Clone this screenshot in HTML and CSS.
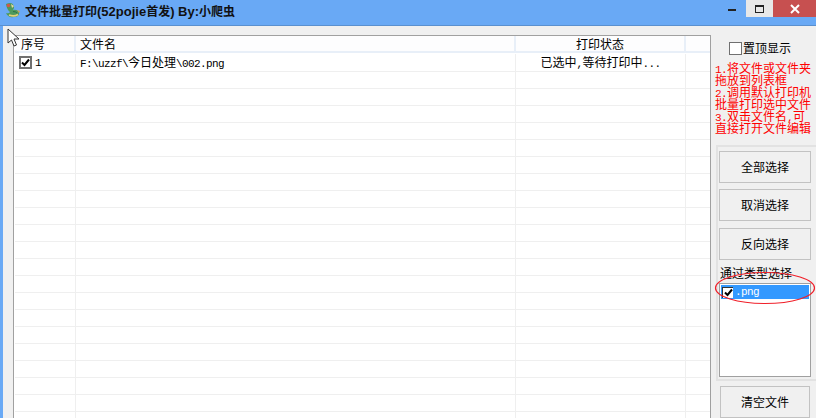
FILE: index.html
```html
<!DOCTYPE html>
<html lang="zh">
<head>
<meta charset="utf-8">
<title>文件批量打印</title>
<link rel="stylesheet" href="styles.css">
</head>
<body>
<div class="window">
  <header class="titlebar">
    <svg class="app-icon" width="16" height="16" viewBox="0 0 16 16">
      <path d="M2 2Q9 -1 10 5Q10 7 9 8Q13 7 15 10Q16 15 10 15Q4 16 2 11Q5 12 6 10Q3 8 2 2Z" fill="#4e9a5c"/>
      <path d="M5 13Q10 15 14 12.500" fill="none" stroke="#e4cf7a" stroke-width="1.800"/>
      <path d="M9 9.500Q12 9.500 13 11" fill="none" stroke="#2f6f45" stroke-width="1"/>
      <circle cx="4.500" cy="3.500" r="1.800" fill="#d0584a"/>
      <path d="M7 2l3 2-2 2z" fill="#e8d9a0"/>
      <path d="M13 8l3 1-1 2z" fill="#d9a04a"/>
    </svg>
    <span class="title"><span class="zh">文件批量打印</span>(52pojie<span class="zh">首发</span>) By:<span class="zh">小爬虫</span></span>
    <div class="controls">
      <div class="ctl ctl-min"><i></i></div>
      <div class="ctl ctl-max"><i></i></div>
      <div class="ctl ctl-close">
        <svg width="10" height="10" viewBox="0 0 10 10"><path d="M1 1L9 9M9 1L1 9" stroke="#fff" stroke-width="2"/></svg>
      </div>
    </div>
  </header>
  <main class="client">
    <section class="list">
      <div class="row head">
        <div class="c c1">序号</div>
        <div class="c c2">文件名</div>
        <div class="c c3">打印状态</div>
        <div class="c c4"></div>
      </div>
      <div class="row first">
        <div class="c c1"><span class="check small"><svg width="9" height="9" viewBox="0 0 9 9"><path d="M1 4.500L3.500 7L8 1.500" fill="none" stroke="#000" stroke-width="2"/></svg></span><span class="mono">1</span></div>
        <div class="c c2"><span class="mono">F:\uzzf\</span>今日处理<span class="mono">\002.png</span></div>
        <div class="c c3">已选中<span class="mono">,</span>等待打印中<span class="mono">...</span></div>
        <div class="c c4"></div>
      </div>
      <div class="row"><div class="c c1"></div><div class="c c2"></div><div class="c c3"></div><div class="c c4"></div></div>
      <div class="row"><div class="c c1"></div><div class="c c2"></div><div class="c c3"></div><div class="c c4"></div></div>
      <div class="row"><div class="c c1"></div><div class="c c2"></div><div class="c c3"></div><div class="c c4"></div></div>
      <div class="row"><div class="c c1"></div><div class="c c2"></div><div class="c c3"></div><div class="c c4"></div></div>
      <div class="row"><div class="c c1"></div><div class="c c2"></div><div class="c c3"></div><div class="c c4"></div></div>
      <div class="row"><div class="c c1"></div><div class="c c2"></div><div class="c c3"></div><div class="c c4"></div></div>
      <div class="row"><div class="c c1"></div><div class="c c2"></div><div class="c c3"></div><div class="c c4"></div></div>
      <div class="row"><div class="c c1"></div><div class="c c2"></div><div class="c c3"></div><div class="c c4"></div></div>
      <div class="row"><div class="c c1"></div><div class="c c2"></div><div class="c c3"></div><div class="c c4"></div></div>
      <div class="row"><div class="c c1"></div><div class="c c2"></div><div class="c c3"></div><div class="c c4"></div></div>
      <div class="row"><div class="c c1"></div><div class="c c2"></div><div class="c c3"></div><div class="c c4"></div></div>
      <div class="row"><div class="c c1"></div><div class="c c2"></div><div class="c c3"></div><div class="c c4"></div></div>
      <div class="row"><div class="c c1"></div><div class="c c2"></div><div class="c c3"></div><div class="c c4"></div></div>
      <div class="row"><div class="c c1"></div><div class="c c2"></div><div class="c c3"></div><div class="c c4"></div></div>
      <div class="row"><div class="c c1"></div><div class="c c2"></div><div class="c c3"></div><div class="c c4"></div></div>
      <div class="row"><div class="c c1"></div><div class="c c2"></div><div class="c c3"></div><div class="c c4"></div></div>
      <div class="row"><div class="c c1"></div><div class="c c2"></div><div class="c c3"></div><div class="c c4"></div></div>
      <div class="row"><div class="c c1"></div><div class="c c2"></div><div class="c c3"></div><div class="c c4"></div></div>
      <div class="row"><div class="c c1"></div><div class="c c2"></div><div class="c c3"></div><div class="c c4"></div></div>
      <div class="row"><div class="c c1"></div><div class="c c2"></div><div class="c c3"></div><div class="c c4"></div></div>
      <div class="row"><div class="c c1"></div><div class="c c2"></div><div class="c c3"></div><div class="c c4"></div></div>
    </section>
    <aside class="side">
      <label class="topmost"><span class="check big"></span>置顶显示</label>
      <div class="help">
        <div class="help-line"><span class="mono">1.</span>将文件或文件夹</div>
        <div class="help-line">拖放到列表框</div>
        <div class="help-line"><span class="mono">2.</span>调用默认打印机</div>
        <div class="help-line">批量打印选中文件</div>
        <div class="help-line"><span class="mono">3.</span>双击文件名<span class="mono">,</span>可</div>
        <div class="help-line">直接打开文件编辑</div>
      </div>
      <div class="group">
        <button class="btn">全部选择</button>
        <button class="btn mid">取消选择</button>
        <button class="btn">反向选择</button>
        <div class="type-label">通过类型选择</div>
        <div class="type-list">
          <div class="type-item"><span class="check tick"><svg width="9" height="9" viewBox="0 0 9 9"><path d="M1 4.500L3.500 7L8 1.500" fill="none" stroke="#000" stroke-width="2"/></svg></span><span class="mono">.png</span></div>
        </div>
      </div>
      <button class="btn clear">清空文件</button>
    </aside>
  </main>
</div>
<svg class="ellipse" width="104" height="36" viewBox="0 0 104 36"><ellipse cx="51" cy="18" rx="49.500" ry="15.500" fill="none" stroke="#f0202a" stroke-width="1.200"/></svg>
<svg class="cursor" width="14" height="20" viewBox="0 0 14 20"><path d="M1 1V15L4.500 12L7 18L9.500 17L7 11H12Z" fill="#fff" stroke="#333" stroke-width="1"/></svg>
</body>
</html>
```
FILE: styles.css
```css
html, body {
  margin: 0;
  padding: 0;
  width: 816px;
  height: 418px;
  overflow: hidden;
}
body {
  position: relative;
  font-family: "Noto Sans CJK SC", "Liberation Sans", sans-serif;
  font-size: 12px;
  color: #000;
  background: #f0f0f0;
}
.window {
  display: flex;
  flex-direction: column;
  height: 418px;
  background: #69a9f5;
}
.titlebar {
  display: flex;
  align-items: flex-start;
  height: 25px;
  flex: none;
  border-bottom: 1px solid #5a90cf;
}
.app-icon {
  margin: 2px 0 0 4px;
}
.title {
  margin-left: 5px;
  font-family: "Liberation Sans", "Noto Sans CJK SC", sans-serif;
  font-weight: 700;
  font-size: 13px;
  line-height: 22px;
  color: #111;
  white-space: pre;
}
.zh {
  font-family: "Noto Sans CJK SC", sans-serif;
  font-size: 12px;
}
.controls {
  display: flex;
  margin-left: auto;
}
.ctl {
  height: 17px;
  display: flex;
  align-items: center;
  justify-content: center;
}
.ctl-min { width: 20px; margin-right: 4px; }
.ctl-min i { width: 8px; height: 2px; background: #222; margin-top: 3px; }
.ctl-max { width: 27px; background: #e8e8e8; }
.ctl-max i { width: 7px; height: 5px; border: 1.5px solid #222; border-top-width: 2px; box-sizing: content-box; }
.ctl-close { width: 43px; background: #c75050; }
.client {
  flex: 1;
  display: flex;
  margin-left: 3px;
  padding: 9px 0 0 10px;
  background: #f0f0f0;
  min-height: 0;
}
.list {
  width: 698px;
  flex: none;
  box-sizing: border-box;
  border: 1px solid #a0a0a0;
  border-bottom: none;
  padding-left: 1px;
  background: #fff;
  overflow: hidden;
}
.row {
  display: flex;
  height: 17px;
  border-bottom: 1px solid #efefef;
  box-sizing: border-box;
  line-height: 16px;
}
.row.head {
  height: 17px;
  margin-bottom: 1px;
  border-bottom: 2px solid #e8eff8;
  background: #fdfdfe;
  line-height: 16px;
}
.row.first { height: 18px; }
.c {
  box-sizing: border-box;
  height: 100%;
  border-right: 1px solid #efefef;
  white-space: nowrap;
}
.head .c { border-right: 2px solid #e8eff8; }
.c1 { width: 61px; padding-left: 4px; display: flex; align-items: center; }
.c2 { width: 440px; padding-left: 4px; }
.c3 { width: 170px; text-align: center; }
.c4 { flex: 1; border-right: none; }
.head .c4 { border-right: none; }
.head .c1 { padding-left: 6px; }
.first .c1 { padding-left: 4px; }
.mono {
  font-family: "Liberation Mono", monospace;
  font-size: 11px;
  letter-spacing: -0.6px;
}
.check {
  display: inline-flex;
  align-items: center;
  justify-content: center;
  box-sizing: border-box;
  flex: none;
  background: #fff;
}
.check.small {
  width: 13px;
  height: 13px;
  border: 2px solid #707070;
  margin-right: 3px;
}
.check.big {
  width: 13px;
  height: 13px;
  border: 1px solid #707070;
  margin-right: 1px;
}
.check.tick {
  width: 11px;
  height: 11px;
  margin: 0 2px 0 1px;
  border-top: 1px solid #333;
  border-left: 1px solid #333;
}
.side {
  flex: 1;
  min-width: 0;
  display: flex;
  flex-direction: column;
  padding-left: 5px;
}
.topmost {
  display: flex;
  align-items: center;
  height: 14px;
  margin: 6px 0 0 13px;
  line-height: 14px;
}
.help {
  margin: 7px 0 0 -1px;
  width: 110px;
  color: #ff0000;
  font-size: 12px;
  white-space: nowrap;
}
.help-line {
  height: 12px;
  line-height: 12px;
}
.group {
  box-sizing: border-box;
  display: flex;
  flex-direction: column;
  align-items: flex-start;
  height: 236px;
  margin-top: 11px;
  border: 2px solid #e2e2e2;
  border-right: none;
  padding: 4px 0 0 1px;
}
.btn {
  display: block;
  padding: 0 0 2px;
  width: 92px;
  height: 32px;
  flex: none;
  margin-bottom: 6px;
  background: #f0f0f0;
  border: 1px solid #c2c2c2;
  font: inherit;
  color: #000;
  font-size: 12px;
}
.btn.mid { margin-bottom: 7px; }
.type-label {
  line-height: 16px;
  height: 16px;
  margin-top: -1px;
  margin-left: 1px;
  white-space: nowrap;
}
.type-list {
  box-sizing: border-box;
  width: 92px;
  height: 94px;
  margin-top: 2px;
  border: 1px solid #a0a0a0;
  background: #fff;
  padding: 1px;
}
.type-item {
  display: flex;
  align-items: center;
  height: 14px;
  background: #3399ff;
  color: #fff;
}
.btn.clear {
  margin: 5px 0 0 4px;
  width: 90px;
}
.ellipse {
  position: absolute;
  left: 714px;
  top: 270px;
}
.cursor {
  position: absolute;
  left: 7px;
  top: 28px;
}
```
